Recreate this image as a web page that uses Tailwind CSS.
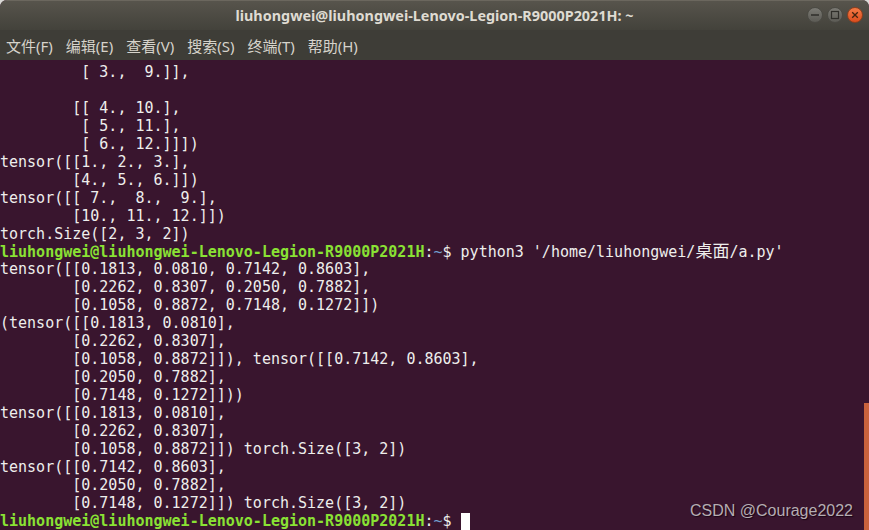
<!DOCTYPE html>
<html><head><meta charset="utf-8"><script src="https://cdn.jsdelivr.net/npm/@tailwindcss/browser@4"></script></head>
<body class="m-0 bg-[#d9d9d5]">
<div class="relative flex h-[530px] w-[869px] flex-col overflow-hidden rounded-t-[7px] bg-[#39152e]">
  <header class="relative flex h-[30px] shrink-0 items-center justify-center border-t border-[#6b675e] bg-gradient-to-b from-[#57544c] to-[#43423b]">
    <h1 class="font-['Noto_Sans',sans-serif] text-[14.4px] font-bold text-[#dfdbd2]">liuhongwei@liuhongwei-Lenovo-Legion-R9000P2021H: ~</h1>
    <div class="absolute right-[6px] top-[6px] flex gap-[4px]">
      <span class="flex h-[16px] w-[16px] items-center justify-center rounded-full border border-[#4b4a44] bg-gradient-to-b from-[#7b7a74] to-[#5c5b55]"><svg width="10" height="10" viewBox="0 0 10 10"><path d="M1 5H9" stroke="#2f2e2a" stroke-width="1.3"/></svg></span>
      <span class="flex h-[16px] w-[16px] items-center justify-center rounded-full border border-[#4b4a44] bg-gradient-to-b from-[#7b7a74] to-[#5c5b55]"><svg width="10" height="10" viewBox="0 0 10 10"><rect x="1.5" y="1.5" width="7" height="7" fill="none" stroke="#2f2e2a" stroke-width="1.2"/></svg></span>
      <span class="flex h-[16px] w-[16px] items-center justify-center rounded-full border border-[#8f3f1e] bg-gradient-to-b from-[#f47a45] to-[#dc4c1c]"><svg width="10" height="10" viewBox="0 0 10 10"><path d="M2.2 2.2L7.8 7.8M7.8 2.2L2.2 7.8" stroke="#43240f" stroke-width="1.3"/></svg></span>
    </div>
  </header>
  <nav class="flex h-[30px] shrink-0 items-center gap-[13px] bg-[#3e3d37] pl-[6px] pt-[3px] font-['Noto_Sans','Noto_Sans_CJK_SC',sans-serif] text-[15px] text-[#d6d3cb]">
    <span>文件(F)</span><span>编辑(E)</span><span>查看(V)</span><span>搜索(S)</span><span>终端(T)</span><span>帮助(H)</span>
  </nav>
  <main class="relative flex-1 overflow-hidden">
    <pre class="m-0 pl-0 pt-[4px] font-['DejaVu_Sans_Mono','Noto_Sans_CJK_SC',monospace] text-[15px] leading-[17.96px] text-[#eeeeec]">         [ 3.,  9.]],

        [[ 4., 10.],
         [ 5., 11.],
         [ 6., 12.]]])
tensor([[1., 2., 3.],
        [4., 5., 6.]])
tensor([[ 7.,  8.,  9.],
        [10., 11., 12.]])
torch.Size([2, 3, 2])
<b class="text-[#8ae234]">liuhongwei@liuhongwei-Lenovo-Legion-R9000P2021H</b>:<b class="font-normal text-[#729fcf]">~</b>$ python3 '/home/liuhongwei/<span class="text-[17px] leading-[0]">桌面</span>/a.py'
tensor([[0.1813, 0.0810, 0.7142, 0.8603],
        [0.2262, 0.8307, 0.2050, 0.7882],
        [0.1058, 0.8872, 0.7148, 0.1272]])
(tensor([[0.1813, 0.0810],
        [0.2262, 0.8307],
        [0.1058, 0.8872]]), tensor([[0.7142, 0.8603],
        [0.2050, 0.7882],
        [0.7148, 0.1272]]))
tensor([[0.1813, 0.0810],
        [0.2262, 0.8307],
        [0.1058, 0.8872]]) torch.Size([3, 2])
tensor([[0.7142, 0.8603],
        [0.2050, 0.7882],
        [0.7148, 0.1272]]) torch.Size([3, 2])
<b class="text-[#8ae234]">liuhongwei@liuhongwei-Lenovo-Legion-R9000P2021H</b>:<b class="font-normal text-[#729fcf]">~</b>$ <span class="inline-block h-[18px] w-[9px] bg-white align-top"></span></pre>
    <div class="absolute bottom-0 right-0 h-[127px] w-[5px] bg-[#c8623c]"></div>
    <div class="absolute bottom-[9px] right-[16px] font-['Liberation_Sans',sans-serif] text-[16px] leading-[20px] text-[#b5adb2] [text-shadow:1px_1px_1px_#1a0515]">CSDN @Courage2022</div>
  </main>
</div>
</body></html>
